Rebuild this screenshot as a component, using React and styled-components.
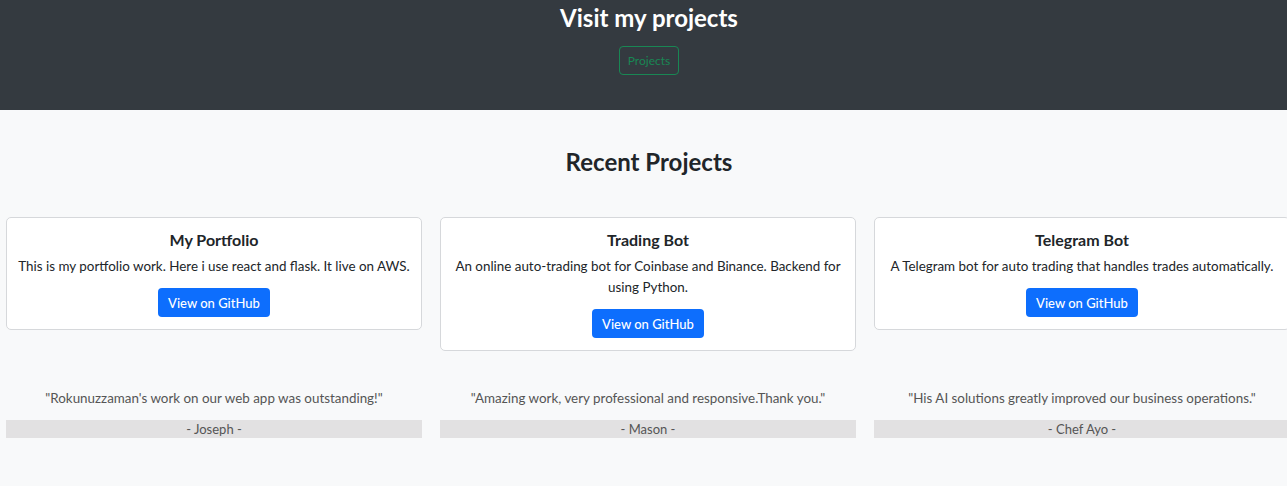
import React from 'react';
import styled, { createGlobalStyle } from 'styled-components';

const GlobalStyle = createGlobalStyle`
  * { box-sizing: border-box; }
  body {
    margin: 0;
    font-family: Lato, "Noto Sans", sans-serif;
    color: #212529;
    background: #f8f9fa;
    overflow: hidden;
  }
`;

const Page = styled.div`
  width: 1298px;
`;

const Hero = styled.header`
  background: #343a40;
  height: 110px;
  display: flex;
  flex-direction: column;
  align-items: center;
  padding-top: 2px;
`;

const HeroTitle = styled.h1`
  margin: 0;
  color: #fff;
  font-size: 24px;
  font-weight: 700;
  line-height: 32px;
`;

const OutlineButton = styled.a`
  margin-top: 12px;
  display: inline-flex;
  align-items: center;
  height: 29px;
  padding: 0 8px;
  border: 1px solid #198754;
  border-radius: 4px;
  color: #198754;
  font-size: 12px;
  text-decoration: none;
`;

const Section = styled.section`
  padding-top: 36px;
`;

const SectionTitle = styled.h2`
  margin: 0 0 39px;
  text-align: center;
  font-size: 24px;
  font-weight: 700;
  line-height: 32px;
`;

const Grid = styled.div`
  display: grid;
  grid-template-columns: repeat(3, 416px);
  column-gap: 18px;
  padding-left: 6px;
  align-items: start;
`;

const Card = styled.div`
  background: #fff;
  border: 1px solid #d6d8db;
  border-radius: 5px;
  padding: 12px 10px 12px;
  text-align: center;
`;

const CardTitle = styled.h5`
  margin: 0 0 6px;
  font-size: 16px;
  font-weight: 700;
  line-height: 20px;
`;

const CardText = styled.p`
  margin: 0 0 11px;
  font-size: 13.4px;
  line-height: 21px;
  color: #212529;
`;

const GitHubButton = styled.a`
  display: inline-flex;
  align-items: center;
  height: 29px;
  padding: 0 10px;
  background: #0d6efd;
  color: #fff;
  border-radius: 4px;
  font-size: 13px;
  font-weight: 500;
  text-decoration: none;
`;

const Testimonials = styled(Grid)`
  margin-top: 37px;
`;

const Quote = styled.div`
  text-align: center;
`;

const QuoteText = styled.p`
  margin: 0 0 12px;
  font-size: 13.4px;
  line-height: 20px;
  color: #555;
`;

const Author = styled.div`
  background: #e2e1e2;
  height: 18px;
  line-height: 18px;
  font-size: 13px;
  color: #555;
`;

const projects = [
  {
    name: 'My Portfolio',
    text: 'This is my portfolio work. Here i use react and flask. It live on AWS.',
  },
  {
    name: 'Trading Bot',
    text: 'An online auto-trading bot for Coinbase and Binance. Backend for using Python.',
  },
  {
    name: 'Telegram Bot',
    text: 'A Telegram bot for auto trading that handles trades automatically.',
  },
];

const quotes = [
  { text: '"Rokunuzzaman\'s work on our web app was outstanding!"', who: 'Joseph' },
  { text: '"Amazing work, very professional and responsive.Thank you."', who: 'Mason' },
  { text: '"His AI solutions greatly improved our business operations."', who: 'Chef Ayo' },
];

export default function App() {
  return (
    <Page>
      <GlobalStyle />
      <Hero>
        <HeroTitle>Visit my projects</HeroTitle>
        <OutlineButton href="#projects">Projects</OutlineButton>
      </Hero>
      <Section id="projects">
        <SectionTitle>Recent Projects</SectionTitle>
        <Grid>
          {projects.map((p) => (
            <Card key={p.name}>
              <CardTitle>{p.name}</CardTitle>
              <CardText>{p.text}</CardText>
              <GitHubButton href="#github">View on GitHub</GitHubButton>
            </Card>
          ))}
        </Grid>
        <Testimonials>
          {quotes.map((q) => (
            <Quote key={q.who}>
              <QuoteText>{q.text}</QuoteText>
              <Author>- {q.who} -</Author>
            </Quote>
          ))}
        </Testimonials>
      </Section>
    </Page>
  );
}
